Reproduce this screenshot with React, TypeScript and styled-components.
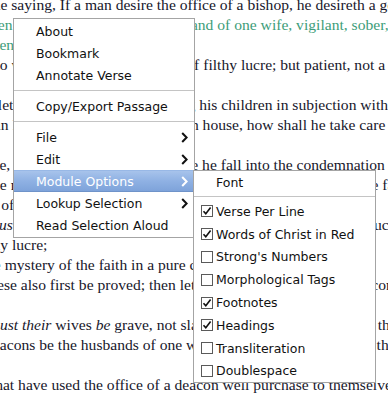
import React from 'react';
import styled, { createGlobalStyle } from 'styled-components';

const Global = createGlobalStyle`
  html, body { margin: 0; padding: 0; background: #fff; }
  #root { width: 388px; height: 399px; }
`;

const Page = styled.div`
  position: relative;
  width: 388px;
  height: 399px;
  overflow: hidden;
  background: #fff;
`;

const Scripture = styled.div`
  margin-top: -5px;
  font-family: "Liberation Serif", "Times New Roman", serif;
  font-size: 15.6px;
  line-height: 20px;
  color: #17172b;
`;

const Line = styled.div<{ $x?: number; $green?: boolean }>`
  white-space: nowrap;
  height: 20px;
  margin-left: ${(p) => p.$x ?? -85}px;
  color: ${(p) => (p.$green ? '#3d9d79' : 'inherit')};
`;

const Menu = styled.div<{ $left: number; $top: number; $width: number }>`
  position: absolute;
  left: ${(p) => p.$left}px;
  top: ${(p) => p.$top}px;
  width: ${(p) => p.$width}px;
  box-sizing: border-box;
  background: #fff;
  border: 1px solid #a4a4a4;
  padding: 1px 0 1px;
  font-family: "DejaVu Sans", "Noto Sans", sans-serif;
  font-size: 12.5px;
  color: #111;
`;

const SubMenu = styled(Menu)`
  padding: 0;
`;

const Item = styled.div<{ $active?: boolean; $check?: boolean }>`
  height: ${(p) => (p.$check ? 22.8 : 22)}px;
  box-sizing: border-box;
  display: flex;
  align-items: center;
  gap: 3px;
  padding: 0 6px 0 ${(p) => (p.$check ? 7 : 22)}px;
  color: ${(p) => (p.$active ? '#fff' : 'inherit')};
  background: ${(p) =>
    p.$active ? 'linear-gradient(to bottom, #a7c3eb 0%, #8fb1e3 50%, #7ea3da 100%)' : 'transparent'};
  border-bottom: 1px solid ${(p) => (p.$active ? '#6f93c9' : 'transparent')};
  border-top: 1px solid ${(p) => (p.$active ? '#98b8e6' : 'transparent')};
`;

const Label = styled.span`
  flex: 1;
  white-space: nowrap;
`;

const Separator = styled.div<{ $gap?: number }>`
  height: 1px;
  margin: ${(p) => p.$gap ?? 4}px 0;
  background: #c4c4c4;
`;

const Box = styled.span`
  width: 12px;
  height: 12px;
  box-sizing: border-box;
  border: 1px solid #5a5a5a;
  background: #fff;
  display: inline-flex;
  align-items: center;
  justify-content: center;
  flex: none;
`;

const Chevron: React.FC = () => (
  <svg width="7" height="11" viewBox="0 0 7 11">
    <path d="M1.2 1 L5.6 5.5 L1.2 10" fill="none" stroke="currentColor" strokeWidth="2" />
  </svg>
);

const Check: React.FC<{ on: boolean }> = ({ on }) => (
  <Box>
    {on && (
      <svg width="10" height="10" viewBox="0 0 10 10">
        <path d="M1.5 5.2 L3.8 7.8 L8.6 1.6" fill="none" stroke="#111" strokeWidth="1.6" />
      </svg>
    )}
  </Box>
);

type Seg = string | { i: string };
const lines: { x?: number; green?: boolean; parts: Seg[] }[] = [
  { parts: ['1 This is a true saying, If a man desire the office of a bishop, he desireth a good work.'] },
  { green: true, parts: ['2 A bishop then must be blameless, the husband of one wife, vigilant, sober, of good'] },
  { green: true, x: -90, parts: ['behaviour, given to hospitality, apt to teach;'] },
  { x: -82, parts: ['3 Not given to wine, no striker, not greedy of filthy lucre; but patient, not a brawler, not'] },
  { parts: ['covetous;'] },
  { x: -84, parts: ['4 One that ruleth well his own house, having his children in subjection with all gravity;'] },
  { parts: ['5 (For if a man know not how to rule his own house, how shall he take care of the church'] },
  { parts: ['of God?)'] },
  { parts: ['6 Not a novice, lest being lifted up with pride he fall into the condemnation of the devil.'] },
  { parts: ['7 Moreover he must have a good report of them which are without; lest he fall into reproach'] },
  { parts: ['and the snare of the devil.'] },
  { parts: ['8 Likewise ', { i: 'must' }, ' the deacons ', { i: 'be' }, ' grave, not doubletongued, not given to much wine, not'] },
  { x: -89, parts: ['greedy of filthy lucre;'] },
  { parts: ['9 Holding the mystery of the faith in a pure conscience.'] },
  { x: -84, parts: ['10 And let these also first be proved; then let them use the office of a deacon, being found'] },
  { parts: ['blameless.'] },
  { x: -84, parts: ['11 Even so ', { i: 'must their' }, ' wives ', { i: 'be' }, ' grave, not slanderers, sober, faithful in all things.'] },
  { x: -82, parts: ['12 Let the deacons be the husbands of one wife, ruling their children and their own houses'] },
  { parts: ['well.'] },
  { parts: ['13 For they that have used the office of a deacon well purchase to themselves a good degree,'] },
];

const mainItems: ({ sep: true } | { label: string; sub?: boolean; active?: boolean })[] = [
  { label: 'About' },
  { label: 'Bookmark' },
  { label: 'Annotate Verse' },
  { sep: true },
  { label: 'Copy/Export Passage' },
  { sep: true },
  { label: 'File', sub: true },
  { label: 'Edit', sub: true },
  { label: 'Module Options', sub: true, active: true },
  { label: 'Lookup Selection', sub: true },
  { label: 'Read Selection Aloud' },
];

const options: { label: string; on: boolean }[] = [
  { label: 'Verse Per Line', on: true },
  { label: 'Words of Christ in Red', on: true },
  { label: "Strong's Numbers", on: false },
  { label: 'Morphological Tags', on: false },
  { label: 'Footnotes', on: true },
  { label: 'Headings', on: true },
  { label: 'Transliteration', on: false },
  { label: 'Doublespace', on: false },
];

export default function App() {
  return (
    <Page>
      <Global />
      <Scripture>
        {lines.map((l, i) => (
          <Line key={i} $x={l.x} $green={l.green}>
            {l.parts.map((p, j) => (typeof p === 'string' ? <span key={j}>{p}</span> : <i key={j}>{p.i}</i>))}
          </Line>
        ))}
      </Scripture>

      <Menu $left={13} $top={18} $width={182}>
        {mainItems.map((m, i) =>
          'sep' in m ? (
            <Separator key={i} />
          ) : (
            <Item key={i} $active={m.active}>
              <Label>{m.label}</Label>
              {m.sub && <Chevron />}
            </Item>
          )
        )}
      </Menu>

      <SubMenu $left={193} $top={170} $width={183}>
        <Item>
          <Label>Font</Label>
        </Item>
        <Separator $gap={3} />
        {options.map((o) => (
          <Item key={o.label} $check>
            <Check on={o.on} />
            <Label>{o.label}</Label>
          </Item>
        ))}
      </SubMenu>
    </Page>
  );
}
